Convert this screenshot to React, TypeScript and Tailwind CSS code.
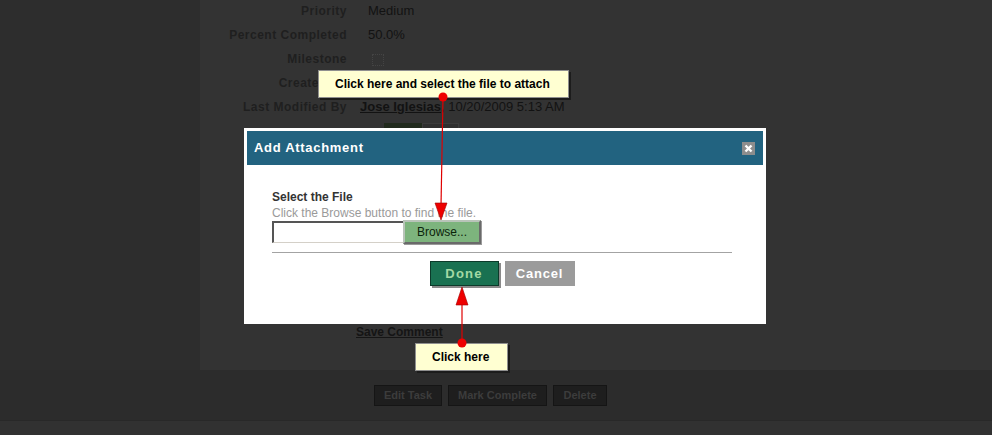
import React from "react";

const sans = { fontFamily: '"Liberation Sans", Arial, sans-serif' };

function Row({ label, children }: { label: string; children?: React.ReactNode }) {
  return (
    <div className="flex items-center h-[24px]">
      <div className="w-[147px] text-right text-[12px] font-bold tracking-[0.5px] text-[#1f1f1f]">{label}</div>
      <div className="ml-[21px] flex items-center text-[13px] text-[#121212]">{children}</div>
    </div>
  );
}

function Callout({ className, children }: { className: string; children: React.ReactNode }) {
  return (
    <div
      className={`absolute h-[28px] flex items-center pl-[16px] bg-[#ffffd2] border border-[#8f8f8f] shadow-[2px_2px_0_#1c1c1c] text-[12px] font-bold text-black ${className}`}
    >
      {children}
    </div>
  );
}

export default function App() {
  return (
    <div className="relative w-[992px] h-[435px] overflow-hidden bg-[#2d2d2d]" style={sans}>
      <div className="flex h-[370px]">
        <div className="w-[200px] bg-[#2d2d2d]" />
        <div className="flex-1 bg-[#333333] flex flex-col">
          <div className="mt-[-1px]">
            <Row label="Priority">Medium</Row>
            <Row label="Percent Completed">50.0%</Row>
            <Row label="Milestone">
              <span className="mt-[2px] ml-[4px] block w-[12px] h-[12px] border border-dotted border-[#444]" />
            </Row>
            <Row label="Created By" />
            <Row label="Last Modified By">
              <span className="ml-[-8px] font-bold underline">Jose Iglesias</span>
              <span>, 10/20/2009 5:13 AM</span>
            </Row>
          </div>
          <div className="flex ml-[184px] mt-[4px]">
            <div className="w-[38px] h-[22px] bg-[#212a1d]" />
            <div className="w-[37px] h-[22px] border border-[#3b3b3b] bg-[#2f2f2f]" />
          </div>
          <div className="ml-[156px] mt-[178px] text-[12px] font-bold underline text-[#151515]">Save Comment</div>
        </div>
      </div>

      <div className="h-[50px] bg-[#2c2c2c] pt-[15px] pl-[374px] flex items-start gap-[6px]">
        <div className="w-[68px] h-[21px] flex items-center justify-center bg-[#1e1e1e] border border-[#151515] text-[11px] font-bold text-[#3c3c3c]">Edit Task</div>
        <div className="w-[99px] h-[21px] flex items-center justify-center bg-[#1e1e1e] border border-[#151515] text-[11px] font-bold text-[#3c3c3c]">Mark Complete</div>
        <div className="w-[54px] h-[21px] flex items-center justify-center bg-[#1e1e1e] border border-[#151515] text-[11px] font-bold text-[#3c3c3c]">Delete</div>
      </div>
      <div className="h-[15px] bg-[#313131] border-t border-[#282828]" />

      {/* modal */}
      <div className="absolute left-[244px] top-[128px] w-[522px] h-[196px] bg-white p-[3px] flex flex-col">
        <div className="h-[34px] bg-[#226380] flex items-center justify-between pl-[7px] pr-[8px]">
          <span className="text-[13px] font-bold tracking-[0.7px] text-white">Add Attachment</span>
          <svg width="13" height="13" viewBox="0 0 13 13">
            <rect width="13" height="13" fill="#8d8d8d" />
            <path d="M3.5 3.5 L9.5 9.5 M9.5 3.5 L3.5 9.5" stroke="#fff" strokeWidth="2.4" />
          </svg>
        </div>
        <div className="px-[25px] pt-[25px]">
          <div className="text-[12px] leading-[14px] font-bold text-[#333]">Select the File</div>
          <div className="mt-[2px] text-[12px] leading-[14px] text-[#9a9a9a]">Click the Browse button to find the file.</div>
          <div className="mt-[1px] flex items-start">
            <div className="w-[134px] h-[22px] bg-white border-t-2 border-l-2 border-[#555] border-b border-r border-b-[#d4d0c8] border-r-[#d4d0c8]" />
            <div className="ml-[-3px] mt-[-1px] w-[78px] h-[24px] flex items-center justify-center bg-[#7db47d] border-2 border-[#b9c4b9] border-r-[#6a6a6a] border-b-[#6a6a6a] shadow-[1px_1px_0_#9a9a9a] text-[12px] text-[#0b240b]">
              Browse...
            </div>
          </div>
          <div className="mt-[8px] w-[460px] h-px bg-[#a3a3a3]" />
          <div className="mt-[8px] w-[460px] flex justify-center gap-[6px]">
            <div className="w-[69px] h-[25px] flex items-center justify-center bg-[#197151] border border-[#0c3a2a] shadow-[2px_2px_0_#8a8a8a] text-[13px] font-bold tracking-[1.2px] text-[#a4d9a4]">
              Done
            </div>
            <div className="w-[70px] h-[25px] flex items-center justify-center bg-[#9b9b9b] text-[13px] font-bold tracking-[0.8px] text-white">
              Cancel
            </div>
          </div>
        </div>
      </div>

      {/* tooltips */}
      <Callout className="left-[318px] top-[70px] w-[251px]">Click here and select the file to attach</Callout>
      <Callout className="left-[415px] top-[343px] w-[93px]">Click here</Callout>

      <svg className="absolute left-0 top-0 pointer-events-none" width="992" height="435">
        <line x1="443" y1="97" x2="441" y2="206" stroke="#e00000" strokeWidth="1.2" />
        <polygon points="435,203 447,203 441,220" fill="#ee0000" stroke="#a00000" strokeWidth="0.6" />
        <circle cx="443" cy="97" r="4.5" fill="#ee0000" />
        <line x1="462" y1="343" x2="462" y2="302" stroke="#e00000" strokeWidth="1.2" />
        <polygon points="456,305 468,305 462,287" fill="#ee0000" stroke="#a00000" strokeWidth="0.6" />
        <circle cx="462" cy="343" r="4.5" fill="#ee0000" />
      </svg>
    </div>
  );
}
